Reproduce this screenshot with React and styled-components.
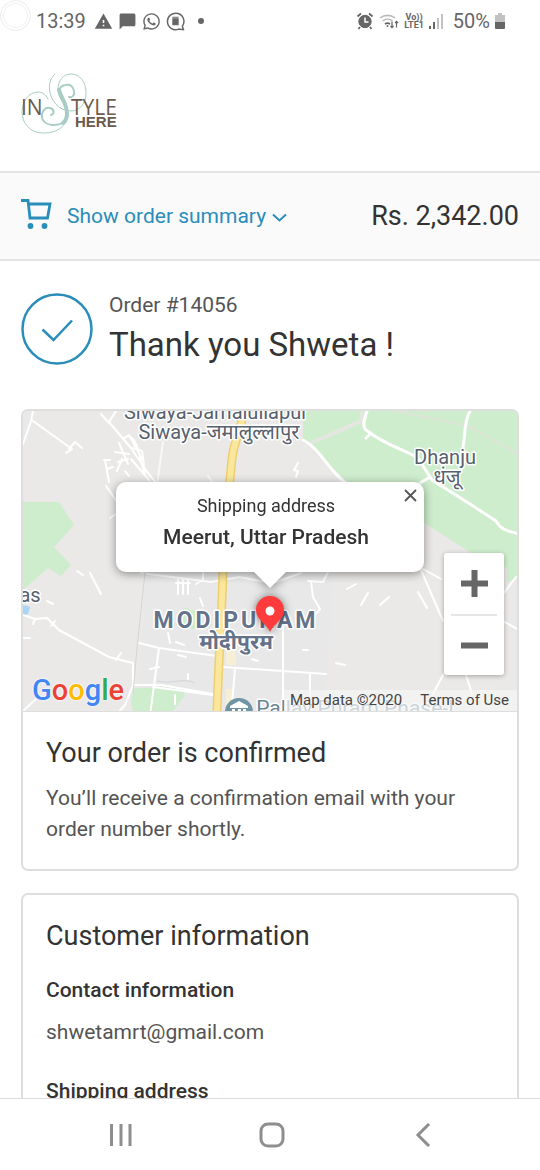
import React from 'react';
import styled, { createGlobalStyle } from 'styled-components';
import { MdWarning, MdChatBubble } from 'react-icons/md';
import { FaWhatsapp } from 'react-icons/fa';

const order = {
  number: '14056',
  name: 'Shweta',
  total: 'Rs. 2,342.00',
  city: 'Meerut, Uttar Pradesh',
  email: 'shwetamrt@gmail.com',
};

const googleLetters = [
  ['G', '#4285f4'],
  ['o', '#ea4335'],
  ['o', '#fbbc05'],
  ['g', '#4285f4'],
  ['l', '#34a853'],
  ['e', '#ea4335'],
];

function StatusBar() {
  return (
    <Status>
      <StatusGroup>
        <CameraHole />
        <StatusText>13:39</StatusText>
        <MdWarning size={19} />
        <MdChatBubble size={19} />
        <FaWhatsapp size={19} />
        <svg width="19" height="19" viewBox="0 0 18 18" fill="none" stroke="currentColor" strokeWidth="1.4">
          <path d="M15.5 13.5A7.8 7.8 0 1 0 12 16.2l4.5.6z" />
          <path d="M6.5 6.5h5V12h-5zM6 5h6" fill="currentColor" strokeWidth="1" />
        </svg>
        <Dot />
      </StatusGroup>
      <StatusGroup>
        <svg width="18" height="18" viewBox="0 0 18 18" fill="none" stroke="currentColor">
          <circle cx="9" cy="9.5" r="6.2" fill="currentColor" />
          <path d="M1.5 4.5l3.5-3M16.5 4.5l-3.5-3M4 15l-1.5 2M14 15l1.5 2" strokeWidth="1.8" />
          <path d="M9 5.5v4.5h3.5" stroke="#fff" strokeWidth="1.5" />
        </svg>
        <svg width="20" height="18" viewBox="0 0 20 18" fill="none" stroke="currentColor" strokeWidth="1.6">
          <path d="M1 6a12 12 0 0 1 15 0M3.5 9a8 8 0 0 1 10 0" opacity=".45" />
          <path d="M6 12a4.5 4.5 0 0 1 5 0" />
          <circle cx="8.5" cy="14" r="1" fill="currentColor" stroke="none" />
          <path d="M13 9.5v6M11.5 14l1.5 1.7 1.5-1.7M17.5 15.5v-6M16 11l1.5-1.7L19 11" strokeWidth="1.2" />
        </svg>
        <Network>
          <span>Vo))</span>
          <span>LTE1</span>
        </Network>
        <svg width="14" height="16" viewBox="0 0 14 16" fill="currentColor">
          <path d="M0 13h2v3H0zM4 9h2v7H4z" />
          <path d="M8 5h2v11H8zM12 1h2v15h-2z" opacity=".4" />
        </svg>
        <StatusText $push>50%</StatusText>
        <svg width="10" height="16" viewBox="0 0 10 16" fill="currentColor">
          <path d="M3 0h4v2h3v7H0V2h3z" opacity=".4" />
          <path d="M0 9h10v6a1 1 0 0 1-1 1H1a1 1 0 0 1-1-1z" />
        </svg>
      </StatusGroup>
    </Status>
  );
}

function Logo() {
  return (
    <svg width="98" height="64" viewBox="0 0 98 64" role="img" aria-label="In Style Here">
      <g fill="none" stroke="#a9cdc4" strokeLinecap="round">
        <path d="M34 2C28 7 27 16 30 24c3 8 10 15 20 15 9 0 15-8 15-18C65 10 59 2 50 2c-8 0-13 7-13 15" strokeWidth="1" />
        <path d="M37 17c0 12 9 14 9 25 0 12-9 19-24 19C9 61 1 51 1 40c0-11 7-20 16-20 4 0 8 2 10 7" strokeWidth="1" />
        <path d="M48 25c4 1 6-3 5-6-1-5-4-7-8-6-4 0-7 3-7 7" strokeWidth="2" />
        <path d="M45 44c0 6-5 9-12 9-8 0-13-4-12-11 1-5 5-7 8-6 4 1 5 6 1 7" strokeWidth="2" />
        <path d="M38 18c2 8 8 13 8 24 0 4-1 7-4 9" strokeWidth="4" />
      </g>
      <LogoText x="0" y="43" $size={21}>IN</LogoText>
      <LogoText x="50" y="43" $size={21}>TYLE</LogoText>
      <LogoText x="54" y="55" $size={15} $bold>HERE</LogoText>
    </svg>
  );
}

function MapDrawing() {
  return (
    <MapSvg viewBox="0 0 494 300" preserveAspectRatio="xMidYMid slice" aria-hidden="true">
      <rect width="494" height="300" fill="#eae9e7" />
      <path d="M124 155h186l-8 145H115z" fill="#e8e8e9" />
      <g fill="#ceedcd">
        <path d="M0 91h36l15 23-20 22 17 18-10 11-13-8-25 22z" />
        <path d="M280 0h214v166l-10 6v-15l-36-15-45-29-80-43-43-42z" />
        <path d="M112 277l46-1 4 8-12 16h-40c-3-8-2-16 2-23zM160 196l12 4v18l-12-2z" />
      </g>
      <path d="M0 194l7 2-2 7-5 2z" fill="#a6d5f7" />
      <path d="M203 238h10v16h-10zM203 278h7v22h-7z" fill="#f7efd5" />
      <g fill="none">
        <path d="M372 0l73 15 49 27" stroke="#dfe4d8" strokeWidth="2" />
        <path d="M288 32l50-22 2-10" stroke="#e4e7df" strokeWidth="4" />
      </g>
      <g fill="none" stroke="#fff" strokeWidth="3" strokeLinecap="round" strokeLinejoin="round">
        <path d="M10 0L8 10 0 33M10 10l39 28-6 4M46 38l6-7 7 6" strokeWidth="2" />
        <path d="M93 0l-7 11 22 26 17 25M78 3l8 9M100 28l6-4 13 24M106 25c11 6 10 25 16 38M92 41l14 2M95 51l10-3M96 32l9 21M99 48l-5 12M81 49h6M82 49l4 22M84 58l6-2M108 48l18 21M102 60l4 5" strokeWidth="2" />
        <path d="M110 37l9 3 2 14M120 56l14 17M83 75l14 20M87 107l6-4 10 7" strokeWidth="2" />
        <path d="M280 29c15 7 25 28 40 41l30 20M344 0c-3 9-5 16-1 19 20 16 38 19 52 28l14 22 38 24 26 17c7 12 17 10 22 13M447 0c-8 14-3 31-10 46M343 27l5-5M397 72l10-6" />
        <path d="M398 159l22 51M400 158l18 10M493 166l-12 16M420 264l-10 19M443 264l6 19M480 210l14 8" strokeWidth="2" />
        <path d="M0 204l12 4 12-1 12 12 50 27 24 6v22l-8 20-15 17M12 208l-2 5M28 215l4-5M93 249l5-7" strokeWidth="2" />
        <path d="M0 300l13-12M116 232l20 5 58 8M136 237l-10 75M112 274h26l52 9M130 276l60 8M200 256l60 4 43 3M212 257l-4 50M260 212v88M287 263v28" strokeWidth="2" />
        <path d="M118 162l70 9 28-5 34 6 28-10M180 150v20M285 170l15 1 5-10M288 171l2 15 7 12-10 12M324 178l9-5M345 182l-7 12M357 194l9-8M395 181l9 16M54 160l6 4M67 162l11 21M24 190l6 3M313 252l9 2M280 239h5M1 227h6" strokeWidth="2" />
        <path d="M155 169v14M160 169v14M165 169v14M153 172h14M173 173l7-4M177 187l3 8M145 222l2 10M153 231l8 3M155 244l8 2M165 263v5M127 258l9-2M152 284v9M229 248l6 2" strokeWidth="2" />
        <path d="M140 31l-7 50M185 65l5 7" stroke="#f8f8f6" strokeWidth="2" />
        <path d="M275 52l-4 7 4 1-2 6" strokeWidth="2" />
      </g>
      <path d="M122 162l-8 75-4 45M134 270c14 4 25-4 38 2" fill="none" stroke="#d4d5d6" strokeWidth="1" />
      <path d="M220 0c-1 20-9 28-11 48-3 30-9 90-9 113-2 60-4 80-6 139" fill="none" stroke="#efce72" strokeWidth="9" />
      <path d="M220 0c-1 20-9 28-11 48-3 30-9 90-9 113-2 60-4 80-6 139" fill="none" stroke="#fbe79b" strokeWidth="6" />
      <circle cx="216" cy="301" r="14" fill="#6f95a5" />
      <path d="M207 295l9-5 9 5v2h-18zM209 298h3v5h-3zM215 298h3v5h-3zM220 298h3v5h-3z" fill="#fff" />
      <MapLabel x="193" y="8" $size={20}>Siwaya-Jamalullapur</MapLabel>
      <MapLabel x="196" y="28" $size={20}>Siwaya-जमालुल्लापुर</MapLabel>
      <MapLabel x="422" y="53" $size={20}>Dhanju</MapLabel>
      <MapLabel x="424" y="73" $size={20}>धंजू</MapLabel>
      <MapLabel x="7" y="191" $size={20}>as</MapLabel>
      <MapLabel x="213" y="217" $size={23} $city>MODIPURAM</MapLabel>
      <MapLabel x="213" y="238" $size={21} $bold>मोदीपुरम</MapLabel>
      <MapLabel x="332" y="304" $size={21} $poi>Pallav Puram Phase-I</MapLabel>
    </MapSvg>
  );
}

function ShippingMap() {
  return (
    <MapArea>
      <MapDrawing />
      <Pin width="30" height="38" viewBox="0 0 30 38">
        <path d="M15 36C12 28 1 24 1 14a14 14 0 0 1 28 0c0 10-11 14-14 22z" fill="#ff3b3b" />
        <circle cx="15" cy="15" r="4.5" fill="#fff" />
      </Pin>
      <Popup>
        <PopupLabel>Shipping address</PopupLabel>
        <PopupCity>{order.city}</PopupCity>
        <CloseButton aria-label="Close">
          <svg width="13" height="13" viewBox="0 0 13 13" stroke="currentColor" strokeWidth="1.8">
            <path d="M1 1l11 11M12 1L1 12" />
          </svg>
        </CloseButton>
      </Popup>
      <ZoomControl>
        <ZoomButton aria-label="Zoom in">
          <svg width="27" height="27" viewBox="0 0 27 27" stroke="currentColor" strokeWidth="6">
            <path d="M0 13.5h27M13.5 0v27" />
          </svg>
        </ZoomButton>
        <ZoomButton aria-label="Zoom out">
          <svg width="27" height="27" viewBox="0 0 27 27" stroke="currentColor" strokeWidth="6">
            <path d="M0 13.5h27" />
          </svg>
        </ZoomButton>
      </ZoomControl>
      <GoogleLink href="#google" aria-label="Google">
        {googleLetters.map(([letter, color], i) => (
          <Letter key={i} $color={color}>{letter}</Letter>
        ))}
      </GoogleLink>
      <Attribution>
        <span>Map data ©2020</span>
        <a href="#terms">Terms of Use</a>
      </Attribution>
    </MapArea>
  );
}

function NavBar() {
  return (
    <Nav>
      <NavButton aria-label="Recent apps">
        <svg width="24" height="24" viewBox="0 0 24 24">
          <path d="M2.5 1v22M12 1v22M21 1v22" />
        </svg>
      </NavButton>
      <NavButton aria-label="Home">
        <svg width="26" height="26" viewBox="0 0 26 26">
          <rect x="2" y="2" width="22" height="22" rx="7" />
        </svg>
      </NavButton>
      <NavButton aria-label="Back">
        <svg width="24" height="24" viewBox="0 0 24 24">
          <path d="M18 1L7 12l11 11" />
        </svg>
      </NavButton>
    </Nav>
  );
}

function App() {
  return (
    <Screen>
      <GlobalStyle />
      <StatusBar />
      <Page>
        <Header>
          <Logo />
        </Header>
        <SummaryBar>
          <SummaryButton>
            <svg width="31" height="34" viewBox="0 0 31 34" fill="none" stroke="currentColor" strokeWidth="2.8">
              <path d="M0 1.5h7L9 19h17.5L29 5H7.5" />
              <circle cx="9.5" cy="27" r="2.9" fill="currentColor" stroke="none" />
              <circle cx="23.5" cy="27" r="2.9" fill="currentColor" stroke="none" />
            </svg>
            <span>Show order summary</span>
            <Chevron width="15" height="9" viewBox="0 0 15 9" fill="none" stroke="currentColor" strokeWidth="2">
              <path d="M1 1.5l6.5 6 6.5-6" />
            </Chevron>
          </SummaryButton>
          <Total>{order.total}</Total>
        </SummaryBar>
        <Main>
          <Thanks>
            <svg width="72" height="72" viewBox="0 0 72 72" fill="none" stroke="#2a8dba" strokeWidth="2.5">
              <circle cx="36" cy="36" r="34.5" />
              <path d="M21.5 36.5l11 10.5L51 27.5" />
            </svg>
            <div>
              <OrderNumber>Order #{order.number}</OrderNumber>
              <Title>{`Thank you ${order.name} !`}</Title>
            </div>
          </Thanks>
          <Card>
            <ShippingMap />
            <CardBody>
              <Heading>Your order is confirmed</Heading>
              <Text>You’ll receive a confirmation email with your order number shortly.</Text>
            </CardBody>
          </Card>
          <Card>
            <CardBody>
              <Heading>Customer information</Heading>
              <SubHeading>Contact information</SubHeading>
              <Text>{order.email}</Text>
              <SubHeading>Shipping address</SubHeading>
            </CardBody>
          </Card>
        </Main>
      </Page>
      <NavBar />
    </Screen>
  );
}

const GlobalStyle = createGlobalStyle`
  * {
    box-sizing: border-box;
  }
  body {
    margin: 0;
    background: #fff;
    color: #333;
    font-family: Roboto, "Noto Sans", sans-serif;
  }
  h1, h2, h3, p {
    margin: 0;
  }
  button {
    padding: 0;
    border: 0;
    background: none;
    font: inherit;
    cursor: pointer;
  }
  svg {
    display: block;
    flex: none;
  }
`;

const Screen = styled.div`
  display: flex;
  flex-direction: column;
  height: 100vh;
`;

const Status = styled.div`
  display: flex;
  justify-content: space-between;
  height: 42px;
  padding-right: 35px;
  color: #666;
`;

const StatusGroup = styled.div`
  display: flex;
  align-items: center;
  gap: 5px;
`;

const CameraHole = styled.div`
  align-self: flex-start;
  width: 31px;
  height: 31px;
  border: 1px solid #ececec;
  border-radius: 50%;
  box-shadow: inset 0 0 0 2px #fff, inset 0 0 0 3px #f1f1f1;
`;

const StatusText = styled.span`
  margin-left: ${(props) => (props.$push ? '5px' : '0')};
  margin-right: ${(props) => (props.$push ? '0' : '3px')};
  font-size: 20px;
`;

const Dot = styled.span`
  width: 6px;
  height: 6px;
  margin-left: 8px;
  border-radius: 50%;
  background: currentColor;
`;

const Network = styled.span`
  display: flex;
  flex-direction: column;
  align-items: center;
  font-size: 9px;
  font-weight: 700;
  line-height: 8px;
`;

const Page = styled.div`
  flex: 1;
  min-height: 0;
  overflow: hidden;
`;

const Header = styled.header`
  padding: 30px 21px 35px;
`;

const LogoText = styled.text`
  fill: #6b5a4e;
  font-family: ${(props) => (props.$bold ? '"Liberation Sans"' : '"Open Sans"')}, sans-serif;
  font-size: ${(props) => props.$size}px;
  font-weight: ${(props) => (props.$bold ? 700 : 500)};
`;

const SummaryBar = styled.section`
  display: flex;
  align-items: center;
  justify-content: space-between;
  padding: 26px 21px;
  border: solid #e4e4e4;
  border-width: 2px 0;
  background: #fafafa;
`;

const SummaryButton = styled.button`
  display: flex;
  align-items: center;
  gap: 15px;
  color: #2a8dba;
  font-size: 21px;
`;

const Chevron = styled.svg`
  margin: 3px 0 0 -9px;
`;

const Total = styled.strong`
  color: #333;
  font-size: 27px;
  font-weight: 400;
  line-height: 32px;
`;

const Main = styled.main`
  display: flex;
  flex-direction: column;
  gap: 22px;
  padding: 32px 21px;
`;

const Thanks = styled.div`
  display: flex;
  align-items: flex-start;
  gap: 16px;
  margin-bottom: 14px;
`;

const OrderNumber = styled.p`
  color: #545454;
  font-size: 21px;
  line-height: 24px;
`;

const Title = styled.h1`
  font-size: 33px;
  font-weight: 400;
  line-height: 56px;
`;

const Card = styled.section`
  border: 2px solid #dedede;
  border-radius: 7px;
  overflow: hidden;
`;

const CardBody = styled.div`
  padding: 25px 23px 24px;
`;

const Heading = styled.h2`
  font-size: 27px;
  font-weight: 400;
  line-height: 32px;
`;

const Text = styled.p`
  margin-top: 14px;
  color: #545454;
  font-size: 21px;
  line-height: 31px;
`;

const SubHeading = styled.h3`
  margin-top: 25px;
  font-size: 21px;
  font-weight: 500;
  line-height: 26px;

  ${Text} + & {
    margin-top: 30px;
  }
`;

const MapArea = styled.div`
  position: relative;
  height: 301px;
  border-bottom: 1px solid #dedede;
  overflow: hidden;
`;

const MapSvg = styled.svg`
  width: 100%;
  height: 100%;
`;

const MapLabel = styled.text`
  fill: ${(props) => (props.$city || props.$bold ? '#64728a' : props.$poi ? '#6a8794' : '#56616d')};
  stroke: #fff;
  stroke-width: 3px;
  stroke-linejoin: round;
  paint-order: stroke;
  text-anchor: middle;
  font-size: ${(props) => props.$size}px;
  font-weight: ${(props) => (props.$city || props.$bold ? 700 : 400)};
  letter-spacing: ${(props) => (props.$city ? '3px' : 'normal')};
`;

const Pin = styled.svg`
  position: absolute;
  top: 185px;
  left: 50%;
  margin-left: -15px;
  filter: drop-shadow(0 0 4px rgba(0, 0, 0, 0.5));
`;

const Popup = styled.div`
  position: absolute;
  top: 71px;
  left: 50%;
  width: 308px;
  padding: 12px 16px 19px;
  border-radius: 10px;
  background: #fff;
  text-align: center;
  transform: translateX(-50%);
  filter: drop-shadow(0 2px 5px rgba(0, 0, 0, 0.4));

  &::after {
    content: '';
    position: absolute;
    top: 100%;
    left: 50%;
    margin-left: -16px;
    border: solid transparent;
    border-width: 16px 16px 0;
    border-top-color: #fff;
  }
`;

const PopupLabel = styled.p`
  padding-right: 8px;
  font-size: 18px;
  line-height: 24px;
`;

const PopupCity = styled.p`
  padding-right: 8px;
  margin-top: 3px;
  font-size: 21px;
  font-weight: 500;
  line-height: 32px;
`;

const CloseButton = styled.button`
  position: absolute;
  top: 7px;
  right: 7px;
  color: #555;
`;

const ZoomControl = styled.div`
  position: absolute;
  right: 13px;
  bottom: 36px;
  padding: 0 7px;
  border-radius: 3px;
  background: #fff;
  box-shadow: 0 1px 5px rgba(0, 0, 0, 0.3);
`;

const ZoomButton = styled.button`
  display: grid;
  place-items: center;
  width: 46px;
  height: 61px;
  color: #666;

  & + & {
    border-top: 2px solid #e6e6e6;
  }
`;

const GoogleLink = styled.a`
  position: absolute;
  left: 9px;
  bottom: 3px;
  font-size: 29px;
  font-weight: 500;
  line-height: 36px;
  text-decoration: none;
  text-shadow: 0 0 2px #fff, 0 0 2px #fff;
`;

const Letter = styled.span`
  color: ${(props) => props.$color};
`;

const Attribution = styled.div`
  position: absolute;
  right: 0;
  bottom: 0;
  display: flex;
  gap: 18px;
  padding: 0 8px 0 6px;
  background: rgba(245, 245, 245, 0.7);
  color: #444;
  font-size: 15px;
  line-height: 21px;

  a {
    color: inherit;
    text-decoration: none;
  }
`;

const Nav = styled.nav`
  display: flex;
  height: 72px;
  padding: 0 42px 0 45px;
  border-top: 1px solid #dcdcdc;
  background: #fff;
`;

const NavButton = styled.button`
  flex: 1;
  display: grid;
  place-items: center;
  color: #8e8e8e;

  svg {
    fill: none;
    stroke: currentColor;
    stroke-width: 3px;
  }
`;

export default App;
